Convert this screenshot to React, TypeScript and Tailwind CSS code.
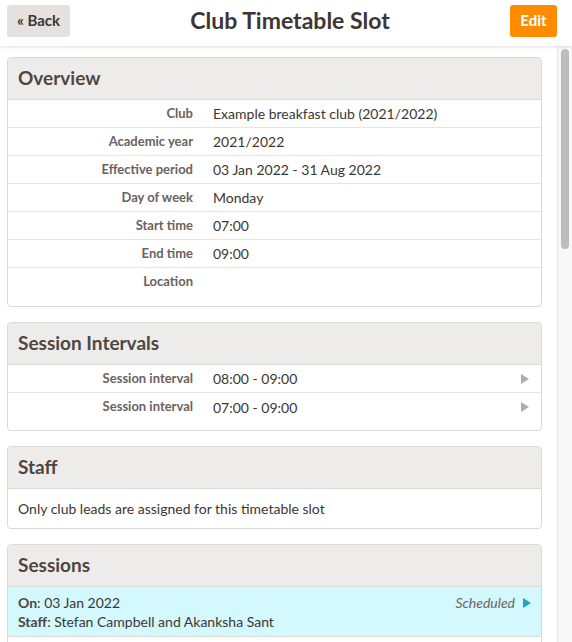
import React from 'react';

const overview: [string, string][] = [
  ['Club', 'Example breakfast club (2021/2022)'],
  ['Academic year', '2021/2022'],
  ['Effective period', '03 Jan 2022 - 31 Aug 2022'],
  ['Day of week', 'Monday'],
  ['Start time', '07:00'],
  ['End time', '09:00'],
  ['Location', ''],
];

const intervals = ['08:00 - 09:00', '07:00 - 09:00'];

const Triangle = ({ color }: { color: string }) => (
  <svg width="8" height="10" viewBox="0 0 8 10" className="block">
    <path d="M0 0 L8 5 L0 10 Z" fill={color} />
  </svg>
);

const Panel = ({ title, children }: { title: string; children: React.ReactNode }) => (
  <div className="shrink-0 rounded-[4px] border border-[#dcd9d6] bg-white overflow-hidden">
    <div className="h-[42px] bg-[#eeecea] border-b border-[#dcd9d6] flex items-center px-[10px]">
      <h2 className="text-[19px] font-bold text-[#4e4642]">{title}</h2>
    </div>
    {children}
  </div>
);

const App: React.FC = () => {
  return (
    <div
      className="w-[572px] h-[642px] overflow-hidden bg-white flex flex-col text-[#3d3633]"
      style={{ fontFamily: 'Lato, "Liberation Sans", sans-serif' }}
    >
      {/* Top bar */}
      <header className="h-[46px] shrink-0 flex items-center justify-between pl-[7px] pr-[15px] pb-[8px] pt-[3px] shadow-[0_1px_3px_rgba(0,0,0,0.12)] relative z-10 bg-white">
        <button className="h-[32px] w-[63px] rounded-[3px] bg-[#e4e1df] text-[15px] font-bold text-[#3d3633]">
          « Back
        </button>
        <h1 className="text-[23px] font-bold text-[#3d3633]">Club Timetable Slot</h1>
        <button className="h-[32px] w-[47px] rounded-[3px] bg-[#ff8c00] text-[15px] font-bold text-white">
          Edit
        </button>
      </header>

      <div className="flex flex-1 min-h-0">
        <main className="flex-1 pl-[7px] pr-[15px] pt-[11px] flex flex-col gap-[15px] overflow-hidden">
          <Panel title="Overview">
            <div className="pb-[10px]">
              {overview.map(([label, value], i) => (
                <div
                  key={label}
                  className={`h-[28px] flex items-center ${i < overview.length - 1 ? 'border-b border-[#e6e3e0]' : ''}`}
                >
                  <span className="w-[185px] text-right text-[13px] font-bold text-[#6b625d]">{label}</span>
                  <span className="pl-[20px] text-[14px]">{value}</span>
                </div>
              ))}
            </div>
          </Panel>

          <Panel title="Session Intervals">
            <div className="pb-[9px]">
              {intervals.map((v, i) => (
                <div
                  key={v}
                  className={`h-[28px] flex items-center pr-[12px] ${i < intervals.length - 1 ? 'border-b border-[#e6e3e0]' : ''}`}
                >
                  <span className="w-[185px] text-right text-[13px] font-bold text-[#6b625d]">Session interval</span>
                  <span className="pl-[20px] text-[14px] flex-1">{v}</span>
                  <Triangle color="#b0acaa" />
                </div>
              ))}
            </div>
          </Panel>

          <Panel title="Staff">
            <div className="h-[39px] flex items-center px-[10px] text-[14px]">
              Only club leads are assigned for this timetable slot
            </div>
          </Panel>

          <Panel title="Sessions">
            <div className="bg-[#d3f8fd] border-b border-[#dcd9d6] px-[10px] pt-[6px] pb-[5px] text-[14px] leading-[19px]">
              <div className="flex items-center">
                <span className="flex-1">
                  <b className="text-[#4e4642]">On</b>: 03 Jan 2022
                </span>
                <span className="italic text-[#6b625d] mr-[8px]">Scheduled</span>
                <Triangle color="#1ea5c4" />
              </div>
              <div>
                <b className="text-[#4e4642]">Staff</b>: Stefan Campbell and Akanksha Sant
              </div>
            </div>
            <div className="h-[40px]" />
          </Panel>
        </main>

        {/* Scrollbar */}
        <div className="w-[15px] shrink-0 bg-[#f8f8f8] border-l border-[#e8e8e8] pt-[3px] flex justify-center">
          <div className="w-[8px] h-[200px] rounded-full bg-[#bdbdbd]" />
        </div>
      </div>
    </div>
  );
};

export default App;
